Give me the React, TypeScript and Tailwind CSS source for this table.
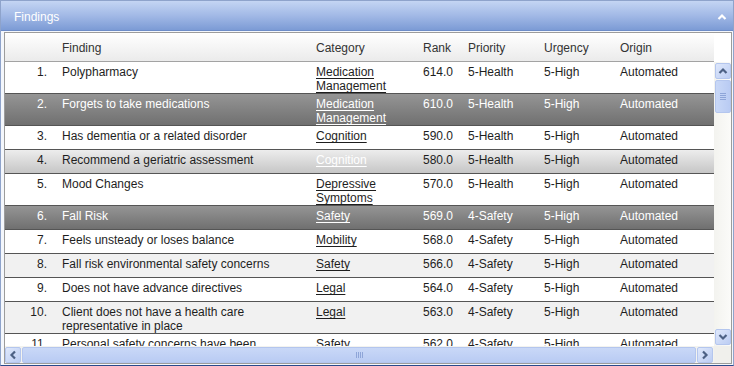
const rows = [
  { n: "1.", finding: "Polypharmacy", cat: "Medication Management", rank: "614.0", pri: "5-Health", urg: "5-High", origin: "Automated", kind: "white" },
  { n: "2.", finding: "Forgets to take medications", cat: "Medication Management", rank: "610.0", pri: "5-Health", urg: "5-High", origin: "Automated", kind: "dark" },
  { n: "3.", finding: "Has dementia or a related disorder", cat: "Cognition", rank: "590.0", pri: "5-Health", urg: "5-High", origin: "Automated", kind: "white" },
  { n: "4.", finding: "Recommend a geriatric assessment", cat: "Cognition", rank: "580.0", pri: "5-Health", urg: "5-High", origin: "Automated", kind: "hover" },
  { n: "5.", finding: "Mood Changes", cat: "Depressive Symptoms", rank: "570.0", pri: "5-Health", urg: "5-High", origin: "Automated", kind: "white" },
  { n: "6.", finding: "Fall Risk", cat: "Safety", rank: "569.0", pri: "4-Safety", urg: "5-High", origin: "Automated", kind: "dark" },
  { n: "7.", finding: "Feels unsteady or loses balance", cat: "Mobility", rank: "568.0", pri: "4-Safety", urg: "5-High", origin: "Automated", kind: "white" },
  { n: "8.", finding: "Fall risk environmental safety concerns", cat: "Safety", rank: "566.0", pri: "4-Safety", urg: "5-High", origin: "Automated", kind: "alt" },
  { n: "9.", finding: "Does not have advance directives", cat: "Legal", rank: "564.0", pri: "4-Safety", urg: "5-High", origin: "Automated", kind: "white" },
  { n: "10.", finding: "Client does not have a health care representative in place", cat: "Legal", rank: "563.0", pri: "4-Safety", urg: "5-High", origin: "Automated", kind: "alt" },
  { n: "11.", finding: "Personal safety concerns have been identified", cat: "Safety", rank: "562.0", pri: "4-Safety", urg: "5-High", origin: "Automated", kind: "white" },
];

const rowBg: Record<string, string> = {
  white: "bg-white text-[#1e1e1e]",
  alt: "bg-[#f1f1f1] text-[#1e1e1e]",
  dark: "bg-gradient-to-b from-[#959595] to-[#707070] text-white",
  hover: "bg-gradient-to-b from-[#ededed] to-[#c6c6c6] text-[#1e1e1e]",
};

function Chevron({ dir, className }: { dir: "up" | "down" | "left" | "right"; className?: string }) {
  const d = {
    up: "M1.5 7 L5 3.5 L8.5 7",
    down: "M1.5 3 L5 6.5 L8.5 3",
    left: "M7 1.5 L3.5 5 L7 8.5",
    right: "M3 1.5 L6.5 5 L3 8.5",
  }[dir];
  return (
    <svg width="10" height="10" viewBox="0 0 10 10" className={className}>
      <path d={d} fill="none" stroke="currentColor" strokeWidth="2.2" />
    </svg>
  );
}

function ScrollButton({ dir }: { dir: "up" | "down" | "left" | "right" }) {
  return (
    <div className="w-[16px] h-[16px] rounded-[2px] border border-[#b4c6ee] bg-gradient-to-br from-[#dfe8fb] to-[#bccdf3] flex items-center justify-center text-[#4d6185]">
      <Chevron dir={dir} />
    </div>
  );
}

export default function App() {
  return (
    <div
      className="w-[734px] h-[366px] border border-[#8ea3cb] border-b-[#2a4a8c] bg-[#f4f7fc] flex flex-col overflow-hidden"
      style={{ fontFamily: '"Liberation Sans", Arial, sans-serif' }}
    >
      <div className="h-[30px] shrink-0 bg-gradient-to-b from-[#c4d5f3] via-[#a2b9e6] to-[#7c9bd5] border-b border-[#6d8cc7] flex items-center justify-between pl-[13px] pr-[6px] pt-[3px]">
        <span className="text-[12px] text-white">Findings</span>
        <Chevron dir="up" className="text-white" />
      </div>
      <div className="flex-1 pt-[1px] pb-[1px] pl-[3px] pr-[1px] flex flex-col">
        <div className="flex-1 border border-[#9c9c9c] bg-white flex flex-col text-[12px] leading-[14px]">
          <div className="flex h-[29px] shrink-0">
            <div className="flex-1 flex items-center pt-[2px] border-b border-[#a3a3a3] bg-gradient-to-b from-white to-[#ebebeb] text-[#333]">
              <div className="w-[57px]" />
              <div className="w-[254px]">Finding</div>
              <div className="w-[107px]">Category</div>
              <div className="w-[45px]">Rank</div>
              <div className="w-[76px]">Priority</div>
              <div className="w-[76px]">Urgency</div>
              <div className="w-[94px]">Origin</div>
            </div>
            <div className="w-[17px] bg-white" />
          </div>
          <div className="flex h-[284px] shrink-0">
            <div className="flex-1 overflow-hidden">
              {rows.map((r) => (
                <div key={r.n} className={`flex min-h-[24px] pt-[3px] border-b border-[#555] ${rowBg[r.kind]}`}>
                  <div className="w-[57px] text-right pr-[15px]">{r.n}</div>
                  <div className="w-[254px] pr-[14px]">{r.finding}</div>
                  <div className="w-[107px] pr-[8px]">
                    <span className={`underline underline-offset-2 ${r.kind === "hover" ? "text-white" : ""}`}>{r.cat}</span>
                  </div>
                  <div className="w-[45px]">{r.rank}</div>
                  <div className="w-[76px]">{r.pri}</div>
                  <div className="w-[76px]">{r.urg}</div>
                  <div className="w-[94px]">{r.origin}</div>
                </div>
              ))}
            </div>
            <div className="w-[17px] bg-gradient-to-r from-[#f3f3ef] to-[#fbfbf9] flex flex-col items-center pt-[1px] pb-[1px]">
              <ScrollButton dir="up" />
              <div className="mt-[1px] w-[16px] h-[33px] rounded-[2px] border border-[#b4c6ee] bg-gradient-to-r from-[#c9d8f7] to-[#b9cbf3] flex flex-col items-center justify-center gap-[1px]">
                <div className="w-[6px] h-[1px] bg-[#8ea5d8]" />
                <div className="w-[6px] h-[1px] bg-[#8ea5d8]" />
                <div className="w-[6px] h-[1px] bg-[#8ea5d8]" />
                <div className="w-[6px] h-[1px] bg-[#8ea5d8]" />
              </div>
              <div className="flex-1" />
              <ScrollButton dir="down" />
            </div>
          </div>
          <div className="flex h-[17px] shrink-0">
            <div className="flex-1 flex items-center bg-[#f3f3ef] pr-[1px] gap-[1px]">
              <ScrollButton dir="left" />
              <div className="flex-1 h-[16px] rounded-[2px] border border-[#b4c6ee] bg-gradient-to-b from-[#c9d8f7] to-[#b9cbf3] flex items-center justify-center gap-[1px]">
                <div className="w-[1px] h-[6px] bg-[#8ea5d8]" />
                <div className="w-[1px] h-[6px] bg-[#8ea5d8]" />
                <div className="w-[1px] h-[6px] bg-[#8ea5d8]" />
                <div className="w-[1px] h-[6px] bg-[#8ea5d8]" />
              </div>
              <ScrollButton dir="right" />
            </div>
            <div className="w-[17px] bg-[#f0f0ec]" />
          </div>
        </div>
      </div>
    </div>
  );
}
